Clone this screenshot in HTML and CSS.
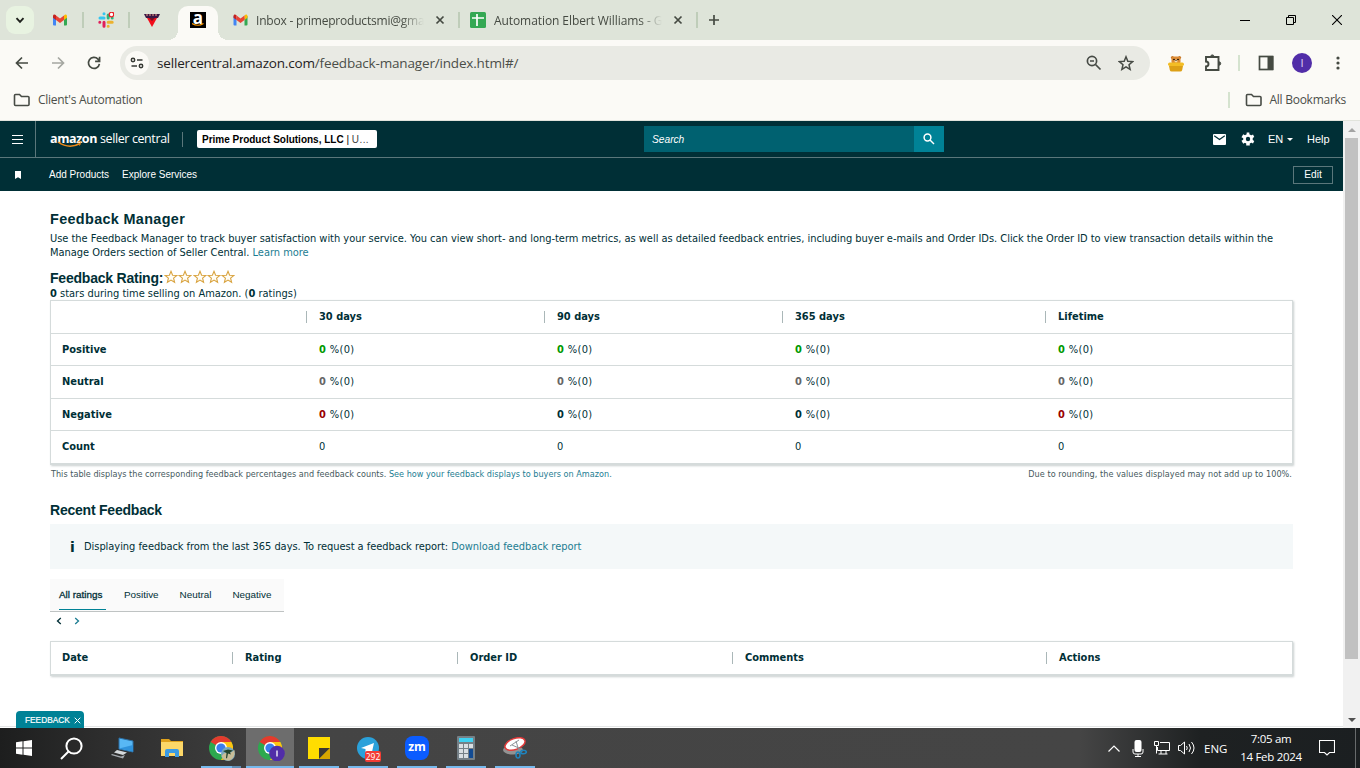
FILE: index.html
```html
<!DOCTYPE html>
<html lang="en">
<head>
  <meta charset="UTF-8" />
  <meta name="viewport" content="width=device-width, initial-scale=1.0"/>
  <title>Feedback Manager</title>
  <link rel="stylesheet" href="styles.css">
</head>
<body>
  <!-- Shared icons -->
  <svg class="defs" width="0" height="0">
    <symbol id="gmail" viewBox="0 0 14 12">
      <path d="M0 2v8.500a1 1 0 0 0 1 1h2V4z" fill="#4285f4"/>
      <path d="M14 2v8.500a1 1 0 0 1-1 1h-2V4z" fill="#34a853"/>
      <path d="M11 1.500V6l3-2.200V2c0-1.500-1.600-2-2.600-1z" fill="#fbbc04"/>
      <path d="M0 2v1.800L3 6V1.300C1.600-.2 0 .5 0 2z" fill="#c5221f"/>
      <path d="M3 1.400V6l4 3 4-3V1.400L7 4.500z" fill="#ea4335"/>
    </symbol>
    <symbol id="folder" viewBox="0 0 18 14">
      <path d="M1.500 11.500v-9q0-1 1-1h4l2 2h6.500q1 0 1 1v7q0 1-1 1h-12.500q-1 0-1-1z" fill="none" stroke="#474b45" stroke-width="1.600"/>
    </symbol>
    <symbol id="close" viewBox="0 0 10 10">
      <path d="M1.500 1.500l7 7M8.500 1.500l-7 7" stroke="#454a42" stroke-width="1.700"/>
    </symbol>
    <symbol id="star" viewBox="0 0 14 14">
      <path d="M7 1.300l1.600 3.900 4.200.3-3.200 2.700 1 4.100L7 10.100l-3.600 2.200 1-4.100-3.200-2.700 4.200-.3z" fill="#fffdf5" stroke="#d9a441" stroke-width="1.100"/>
    </symbol>
    <symbol id="chrome" viewBox="0 0 24 24">
      <circle cx="12" cy="12" r="12" fill="#2da94f"/>
      <path d="M12 12L1.600 6A12 12 0 0 1 22.400 6z" fill="#e33b2e"/>
      <path d="M12 12V6h10.400A12 12 0 0 1 12 24l5.200-9z" fill="#fdc411"/>
      <circle cx="12" cy="12" r="6" fill="#fff"/>
      <circle cx="12" cy="12" r="4.600" fill="#3b7ded"/>
    </symbol>
  </svg>

  <!-- Browser tabs -->
  <div class="tabstrip">
    <div class="tab-search"><svg width="10" height="7" viewBox="0 0 10 7"><path d="M1.500 1.200L5 4.800l3.500-3.600" fill="none" stroke="#1e211c" stroke-width="1.900"/></svg></div>
    <div class="pinned"><svg width="14" height="12"><use href="#gmail"/></svg></div>
    <div class="pinned">
      <svg width="16" height="16" viewBox="0 0 16 16" fill="none" stroke-width="3" stroke-linecap="round">
        <path d="M6 1.700v0M2 6h4" stroke="#36c5f0"/>
        <path d="M10.200 3v3M14.200 6v0" stroke="#2eb67d"/>
        <path d="M10.200 10.300h4M10.200 14.200v0" stroke="#ecb22e"/>
        <path d="M6 10.300v4M1.800 10.300v0" stroke="#e01e5a"/>
        <circle cx="13.500" cy="2.500" r="2.300" fill="#fff" stroke="#ed1c24" stroke-width="1.300"/>
      </svg>
    </div>
    <div class="pinned last">
      <svg width="16" height="14" viewBox="0 0 16 14"><path d="M0 1h16l-2 4H2z" fill="#3a1745"/><path d="M2 2h12" stroke="#f4a28a" stroke-dasharray="2 1"/><path d="M3 5h10L8 14z" fill="#f20d1b"/><path d="M5 5h6L8 8z" fill="#751026"/></svg>
    </div>
    <div class="tab active"><div class="amazon-fav">a<svg width="12" height="3" viewBox="0 0 12 3"><path d="M0 .5q6 3.500 11.500 0" fill="none" stroke="#f90" stroke-width="1.200"/></svg></div></div>
    <div class="tab wide inbox">
      <svg width="15" height="12"><use href="#gmail"/></svg>
      <span class="tab-title">Inbox - primeproductsmi@gma</span>
      <svg class="tab-close" width="10" height="10"><use href="#close"/></svg>
    </div>
    <div class="tab wide sheet">
      <svg width="16" height="16" viewBox="0 0 16 16"><rect width="16" height="16" rx="1.500" fill="#34a853"/><path d="M2 6h12M7 2v12" stroke="#fff" stroke-width="1.700"/></svg>
      <span class="tab-title">Automation Elbert Williams - Go</span>
      <svg class="tab-close" width="10" height="10"><use href="#close"/></svg>
    </div>
    <svg class="new-tab" width="12" height="12" viewBox="0 0 12 12"><path d="M6 1v10M1 6h10" stroke="#454a42" stroke-width="1.700"/></svg>
    <div class="window-btns">
      <svg width="10" height="10" viewBox="0 0 10 10"><path d="M0 5.500h10" stroke="#000"/></svg>
      <svg width="10" height="10" viewBox="0 0 10 10" fill="none" stroke="#000"><path d="M.5 2.500h7v7h-7zM2.500 2.500v-2h7v7h-2"/></svg>
      <svg width="10" height="10" viewBox="0 0 10 10"><path d="M0 0l10 10M10 0L0 10" stroke="#000" stroke-width="1.100"/></svg>
    </div>
  </div>

  <!-- Address bar -->
  <div class="toolbar">
    <div class="tool"><svg width="14" height="14" viewBox="0 0 14 14" fill="none" stroke="#454a42" stroke-width="1.700"><path d="M13 7H2M7 1.500L1.500 7 7 12.500"/></svg></div>
    <div class="tool"><svg width="14" height="14" viewBox="0 0 14 14" fill="none" stroke="#a5a7a1" stroke-width="1.700"><path d="M1 7h11M7 1.500L12.500 7 7 12.500"/></svg></div>
    <div class="tool"><svg width="14" height="14" viewBox="0 0 14 14" fill="none" stroke="#454a42" stroke-width="1.700"><path d="M12.400 7.800A5.500 5.500 0 1 1 11 3.200L12.500 5M12.600 .8v4.500H8.100"/></svg></div>
    <div class="omnibox">
      <div class="site-info"><svg width="14" height="12" viewBox="0 0 14 12" fill="none" stroke="#363934" stroke-width="1.500"><circle cx="3" cy="3" r="1.700"/><path d="M7 3h5.500M1.500 9H7"/><circle cx="11" cy="9" r="1.700"/></svg></div>
      <span class="url"><b>sellercentral.amazon.com</b>/feedback-manager/index.html#/</span>
      <svg class="zoom-icon" width="16" height="16" viewBox="0 0 16 16" fill="none" stroke="#474b45" stroke-width="1.700"><circle cx="6" cy="6" r="4.600"/><path d="M9.500 9.500l5 5M4 6h4"/></svg>
      <svg class="bookmark-star" width="16" height="16" viewBox="0 0 16 16" fill="none" stroke="#474b45" stroke-width="1.500"><path d="M8 1.800l1.800 4.400 4.800.4L11 9.700l1.100 4.600L8 11.800l-4.100 2.500L5 9.700 1.400 6.600l4.800-.4z"/></svg>
    </div>
    <div class="tool ext"><svg width="18" height="17" viewBox="0 0 18 17"><circle cx="5.500" cy="2.500" r="1.600" fill="#c77624"/><circle cx="12.500" cy="2.500" r="1.600" fill="#c77624"/><rect x="4.500" y="1.500" width="9" height="8" rx="3" fill="#dc8b35"/><circle cx="7" cy="4.500" r=".8"/><circle cx="11" cy="4.500" r=".8"/><circle cx="9" cy="6" r="1.500" fill="#f7dca8"/><circle cx="9" cy="5.500" r=".6"/><rect x="1" y="7.500" width="16" height="3.500" rx="1.700" fill="#f3bd25"/><path d="M2 11h14l-.8 4q-.3 1.500-2 1.500H4.800q-1.700 0-2-1.500z" fill="#dda016"/></svg></div>
    <div class="tool puzzle"><svg width="18" height="18" viewBox="0 0 18 18" fill="none" stroke="#454a42" stroke-width="1.900"><path d="M2 3h12.500v13H2v-3.500q2.500-.2 2.500-2.500T2 7.500z"/><path d="M6.700 2.500a1.600 1.600 0 0 1 3.200 0M15 7.800a1.600 1.600 0 0 1 0 3.400" fill="#454a42" stroke-width="1"/></svg></div>
    <span class="divider"></span>
    <div class="tool"><svg width="16" height="16" viewBox="0 0 16 16"><rect x="1.500" y="1.500" width="13" height="13" fill="none" stroke="#454a42" stroke-width="1.700"/><path d="M9.500 1h6v14h-6z" fill="#454a42"/></svg></div>
    <div class="tool"><div class="avatar">I</div></div>
    <div class="tool"><svg width="4" height="14" viewBox="0 0 4 14" fill="#454a42"><circle cx="2" cy="2" r="1.600"/><circle cx="2" cy="7" r="1.600"/><circle cx="2" cy="12" r="1.600"/></svg></div>
  </div>

  <div class="bookmarks">
    <svg width="18" height="14"><use href="#folder"/></svg>
    <span class="bm-client">Client's Automation</span>
    <div class="all-bookmarks">
      <svg width="18" height="14"><use href="#folder"/></svg>
      <span>All Bookmarks</span>
    </div>
  </div>

  <div class="viewport">
    <div class="page">
      <div class="topbar">
        <div class="menu"><svg width="11" height="10" viewBox="0 0 11 10"><path d="M0 1.500h11M0 5.500h11M0 9.500h11" stroke="#fff" stroke-width="1.200"/></svg></div>
        <div class="logo">
          <b>amazon</b><span>seller central</span>
          <svg class="smile" width="26" height="7" viewBox="0 0 26 7" fill="none" stroke="#f08c1a"><path d="M1 1q11 7.500 22 1.500" stroke-width="1.500"/><path d="M20.500 1q4-1 3.500 0T22.500 4.500"/></svg>
        </div>
        <div class="account"><b>Prime Product Solutions, LLC</b> | <span>U...</span></div>
        <div class="search">
          <span>Search</span>
          <div class="search-btn"><svg width="12" height="12" viewBox="0 0 12 12" fill="none" stroke="#fff" stroke-width="1.500"><circle cx="4.500" cy="4.500" r="3.400"/><path d="M7 7l4 4"/></svg></div>
        </div>
        <svg class="mail" width="13" height="11" viewBox="0 0 13 11"><rect width="13" height="11" rx="1" fill="#fff"/><path d="M1.200 1.800l5.300 3.600 5.300-3.600" fill="none" stroke="#002f36" stroke-width="1.200"/></svg>
        <svg class="gear" width="14" height="14" viewBox="0 0 14 14"><g fill="#fff"><path d="M5.700.5h2.600l.5 13H5.200z"/><path d="M5.700.5h2.600l.5 13H5.200z" transform="rotate(60 7 7)"/><path d="M5.700.5h2.600l.5 13H5.200z" transform="rotate(120 7 7)"/><circle cx="7" cy="7" r="4.800"/></g><circle cx="7" cy="7" r="2.200" fill="#002f36"/></svg>
        <span class="lang">EN</span>
        <span class="caret"></span>
        <span class="help">Help</span>
      </div>
      <div class="subbar">
        <svg width="6" height="8" viewBox="0 0 6 8"><path d="M0 0h6v8L3 6.200 0 8z" fill="#fff"/></svg>
        <span class="add">Add Products</span>
        <span class="explore">Explore Services</span>
        <button class="edit">Edit</button>
      </div>

      <div class="content">
        <h1>Feedback Manager</h1>
        <p class="intro">Use the Feedback Manager to track buyer satisfaction with your service. You can view short- and long-term metrics, as well as detailed feedback entries, including buyer e-mails and Order IDs. Click the Order ID to view transaction details within the<br>Manage Orders section of Seller Central. <a>Learn more</a></p>

        <div class="rating">
          <h2>Feedback Rating:</h2>
          <svg width="14" height="14"><use href="#star"/></svg>
          <svg width="14" height="14"><use href="#star"/></svg>
          <svg width="14" height="14"><use href="#star"/></svg>
          <svg width="14" height="14"><use href="#star"/></svg>
          <svg width="14" height="14"><use href="#star"/></svg>
        </div>
        <p><b>0</b> stars during time selling on Amazon. (<b>0</b> ratings)</p>

        <div class="summary">
          <div class="row head"><span></span><b>30 days</b><b>90 days</b><b>365 days</b><b>Lifetime</b></div>
          <div class="row short"><b>Positive</b><span><b class="pos">0</b> %(0)</span><span><b class="pos">0</b> %(0)</span><span><b class="pos">0</b> %(0)</span><span><b class="pos">0</b> %(0)</span></div>
          <div class="row"><b>Neutral</b><span><b class="neu">0</b> %(0)</span><span><b class="neu">0</b> %(0)</span><span><b class="neu">0</b> %(0)</span><span><b class="neu">0</b> %(0)</span></div>
          <div class="row short"><b>Negative</b><span><b class="neg">0</b> %(0)</span><span><b>0</b> %(0)</span><span><b>0</b> %(0)</span><span><b class="neg">0</b> %(0)</span></div>
          <div class="row"><b>Count</b><span>0</span><span>0</span><span>0</span><span>0</span></div>
        </div>
        <div class="notes">
          <span>This table displays the corresponding feedback percentages and feedback counts. <a>See how your feedback displays to buyers on Amazon.</a></span>
          <span class="rounding">Due to rounding, the values displayed may not add up to 100%.</span>
        </div>

        <h2 class="recent">Recent Feedback</h2>
        <div class="info"><i>i</i><span>Displaying feedback from the last 365 days. To request a feedback report: <a>Download feedback report</a></span></div>

        <div class="filters">
          <span class="selected">All ratings</span><span>Positive</span><span>Neutral</span><span>Negative</span>
        </div>
        <div class="pager">
          <svg width="6" height="8" viewBox="0 0 6 8"><path d="M4.800 1L1.500 4l3.300 3" fill="none" stroke="#002f36" stroke-width="1.300"/></svg>
          <svg width="6" height="8" viewBox="0 0 6 8"><path d="M1.200 1l3.300 3-3.300 3" fill="none" stroke="#1c7d92" stroke-width="1.300"/></svg>
        </div>

        <div class="feedback-list"><b>Date</b><b>Rating</b><b>Order ID</b><b>Comments</b><b>Actions</b></div>
      </div>
      <div class="feedback-tab">FEEDBACK <svg width="7" height="7" viewBox="0 0 7 7"><path d="M.7.7l5.600 5.600M6.300.7L.7 6.300" stroke="#fff"/></svg></div>
    </div>
    <div class="scrollbar"><span class="up"></span><div class="thumb"></div><span class="down"></span></div>
  </div>

  <!-- Taskbar -->
  <div class="taskbar">
    <div class="app start"><svg width="16" height="16" viewBox="0 0 16 16" fill="#fff"><path d="M0 2.200L6.500 1.300V7.500H0zM7.500 1.200L16 0v7.500H7.500zM0 8.500h6.500v6.200L0 13.800zM7.500 8.500H16V16l-8.500-1.200z"/></svg></div>
    <div class="app find"><svg width="23" height="23" viewBox="0 0 23 23" fill="none" stroke="#fff" stroke-width="2"><circle cx="14" cy="9" r="7.600"/><path d="M8.500 14.500L1 22"/></svg></div>
    <div class="app"><svg width="24" height="22" viewBox="0 0 24 22"><path d="M8 1l14 3v11L8 12z" fill="#58b7f4" stroke="#2a6fa5"/><path d="M8 11.500l14 3V8z" fill="#2f92db"/><path d="M6 13l10 2.500-4 2.500-9-2.500z" fill="#d5d9dc"/><path d="M1 17l9 2.500 4-1.500-2 3.500L0 18z" fill="#a6abb0"/></svg></div>
    <div class="app"><svg width="22" height="20" viewBox="0 0 22 20"><path d="M0 1h8l2 2h12v15H0z" fill="#e0a21c"/><path d="M0 4h22v14H0z" fill="#fcd768"/><path d="M4 19v-6q0-2 2-2h10q2 0 2 2v6h-4v-4H8v4z" fill="#3b9be4"/></svg></div>
    <div class="app running two">
      <svg width="27" height="25" viewBox="0 0 27 25"><use href="#chrome" width="24" height="24"/><circle cx="19" cy="18" r="7" fill="#77a7bb"/><path d="M12.500 20q3-4 6-3t7-3q1 8-5 10.500-6 .5-8-4.500z" fill="#c8bd98"/><path d="M14 15l5-1.500 5 1-3 2 1 2-3-1-1 5-1-.500.500-5z" fill="#24452c"/></svg>
    </div>
    <div class="app running current">
      <svg width="27" height="25" viewBox="0 0 27 25"><use href="#chrome" width="24" height="24"/><circle cx="19" cy="17.500" r="7.800" fill="#512da8"/><path d="M19 14.500v6" stroke="#fff" stroke-width="1.300"/></svg>
    </div>
    <div class="app running"><svg width="22" height="22" viewBox="0 0 22 22"><path d="M0 0h22v11L11 22H0z" fill="#ffdd00"/><path d="M11 11h11L11 22z" fill="#3b3933"/><path d="M22 11v11H11z" fill="#d7a600"/></svg></div>
    <div class="app running">
      <svg width="22" height="22" viewBox="0 0 22 22"><circle cx="11" cy="11" r="11" fill="#2aa1da"/><path d="M4 11l13-5-2.500 11-4-3-2 2v-4z" fill="#fff"/></svg>
      <span class="count">292</span>
    </div>
    <div class="app running"><div class="zoom-app">zm</div></div>
    <div class="app running"><svg width="18" height="24" viewBox="0 0 18 24"><rect width="18" height="24" rx="1" fill="#758087"/><path d="M2 2h14v4H2z" fill="#3fd1f1"/><path d="M2 8h4v4H2zM7 8h4v4H7zM12 8h4v4h-4zM2 13h4v4H2zM7 13h4v4H7zM2 18h4v4H2zM7 18h4v4H7z" fill="#d9dfe3"/><path d="M12 13h4v9h-4z" fill="#124b93"/></svg></div>
    <div class="app running"><svg width="24" height="22" viewBox="0 0 24 22"><ellipse cx="10" cy="13" rx="10" ry="4.500" fill="#929292"/><ellipse cx="12" cy="7" rx="10.500" ry="5.500" transform="rotate(-20 12 7)" fill="#fff" stroke="#e23b3b" stroke-width="1.500"/><path d="M7 9l9-6M9 8l9 4M13 4l3 10" stroke="#8b9297"/><g fill="none" stroke="#1e83bd" stroke-width="1.600"><ellipse cx="15" cy="18" rx="2" ry="3"/><ellipse cx="20.500" cy="15" rx="2.800" ry="1.800"/></g></svg></div>

    <div class="tray">
      <svg width="12" height="7" viewBox="0 0 12 7"><path d="M.5 6.500L6 1l5.500 5.500" fill="none" stroke="#fff" stroke-width="1.200"/></svg>
      <svg class="t-mic" width="12" height="17" viewBox="0 0 12 17"><rect x="2.500" width="7" height="12" rx="2" fill="#fff"/><path d="M1 9v3q0 2 2 2h6q2 0 2-2V9M6 14v2M3 16.500h6" fill="none" stroke="#fff"/></svg>
      <svg class="t-net" width="16" height="14" viewBox="0 0 16 14" fill="none" stroke="#fff"><path d="M6 1.500h9.500v8h-12V6M7 9.500V13M12 9.500V13M4.500 13h9M.5.500h4v4h-4zM2.500 4.500v8"/></svg>
      <svg class="t-vol" width="17" height="14" viewBox="0 0 17 14" fill="none" stroke="#fff"><path d="M.5 4.500h2l4-3.500v12l-4-3.500h-2zM8.500 5q1.500 2 0 4M11 3q3 4 0 8M13.500 1q5 6 0 12"/></svg>
      <span class="t-lang">ENG</span>
      <div class="clock"><span>7:05 am</span><span>14 Feb 2024</span></div>
      <svg class="t-note" width="16" height="16" viewBox="0 0 16 16"><path d="M.5.500h15v12h-5L8 15l-2.500-2.500h-5z" fill="none" stroke="#fff" stroke-width="1.100"/></svg>
    </div>
  </div>
</body>
</html>
```
FILE: styles.css
```css
* {
  box-sizing: border-box;
}

body {
  margin: 0;
  width: 1360px;
  height: 768px;
  overflow: hidden;
  background: #fff;
  font-family: "Open Sans", "Noto Sans", sans-serif;
  white-space: nowrap;
}

svg {
  display: block;
  flex: none;
}

.defs {
  position: absolute;
}

/* tabs */
.tabstrip {
  display: flex;
  align-items: center;
  height: 40px;
  background: #dee4d9;
  font-size: 12px;
  color: #454a42;
}

.tab-search {
  display: flex;
  align-items: center;
  justify-content: center;
  width: 28px;
  height: 28px;
  margin: 0 4px 0 6px;
  border-radius: 9px;
  background: #e8f3e1;
}

.pinned {
  display: flex;
  align-items: center;
  justify-content: center;
  width: 46px;
  height: 16px;
  border-right: 2px solid #bfcdb9;
}

.pinned.last {
  width: 44px;
  border: none;
  margin-right: 4px;
}

.tab {
  display: flex;
  align-items: center;
}

.tab.active {
  position: relative;
  align-self: flex-end;
  justify-content: center;
  width: 40px;
  height: 34px;
  border-radius: 10px 10px 0 0;
  background: #fbfaf6;
}

.tab.active::before,
.tab.active::after {
  content: "";
  position: absolute;
  bottom: 0;
  left: -10px;
  width: 10px;
  height: 10px;
  background: radial-gradient(circle at 0 0, transparent 10px, #fbfaf6 10px);
}

.tab.active::after {
  left: 40px;
  background: radial-gradient(circle at 100% 0, transparent 10px, #fbfaf6 10px);
}

.amazon-fav {
  display: flex;
  flex-direction: column;
  align-items: center;
  width: 16px;
  height: 16px;
  margin-bottom: 6px;
  background: #000;
  color: #fff;
  font: bold 17px/11px "Open Sans", sans-serif;
}

.tab.wide {
  height: 16px;
  padding-left: 15px;
  border-right: 2px solid #bfcdb9;
}

.inbox {
  width: 242px;
}

.tab.wide.sheet {
  width: 238px;
  padding-left: 10px;
}

.tab-title {
  width: 168px;
  margin-left: 8px;
  letter-spacing: -.2px;
  -webkit-mask-image: linear-gradient(90deg, #000 145px, transparent 168px);
}

.sheet .tab-title {
  letter-spacing: -.08px;
}

.tab-close {
  margin-left: 11px;
}

.new-tab {
  margin-left: 10px;
}

.window-btns {
  display: flex;
  gap: 36px;
  margin: 0 18px 0 auto;
}

/* toolbar */
.toolbar {
  display: flex;
  align-items: center;
  height: 46px;
  padding-left: 4px;
  background: #fbfaf6;
}

.tool {
  display: flex;
  align-items: center;
  justify-content: center;
  width: 36px;
  flex: none;
}

.ext {
  margin-left: 8px;
}

.puzzle {
  margin-left: 1px;
}

.divider {
  width: 2px;
  height: 16px;
  margin: 0 8px 0 7px;
  background: #d5e3cf;
}

.omnibox {
  display: flex;
  align-items: center;
  width: 1030px;
  height: 34px;
  margin-left: 8px;
  padding-left: 5px;
  border-radius: 17px;
  background: #e9eae4;
}

.site-info {
  display: flex;
  align-items: center;
  justify-content: center;
  width: 24px;
  height: 24px;
  border-radius: 50%;
  background: #fbfaf6;
}

.url {
  margin-left: 8px;
  font-size: 13.500px;
  letter-spacing: -.17px;
  color: #4b4e49;
}

.url b {
  font-weight: 400;
  color: #1f211d;
}

.zoom-icon {
  margin-left: auto;
}

.bookmark-star {
  margin: 0 16px;
}

.avatar {
  width: 20px;
  height: 20px;
  border-radius: 50%;
  background: #512da8;
  color: #e1d8f5;
  font-size: 11px;
  line-height: 20px;
  text-align: center;
}

.bookmarks {
  display: flex;
  align-items: center;
  height: 35px;
  padding: 0 14px 7px 13px;
  border-bottom: 1px solid #e1e3dc;
  background: #fbfaf6;
  font-size: 12px;
  letter-spacing: -.27px;
  color: #4b4e49;
}

.bm-client {
  margin-left: 7px;
}

.all-bookmarks {
  display: flex;
  align-items: center;
  gap: 7px;
  margin-left: auto;
  height: 16px;
  padding-left: 15px;
  border-left: 2px solid #d5e3cf;
}

/* page */
.viewport {
  display: flex;
  height: 607px;
}

.page {
  position: relative;
  width: 1343px;
  border-bottom: 1px solid #fff;
  box-shadow: inset 0 -1px #e4e6e6;
  color: #002f36;
  font-family: "DejaVu Sans", Verdana, sans-serif;
  font-size: 9.900px;
}

.topbar,
.subbar {
  display: flex;
  align-items: center;
  background: #002f36;
  color: #fff;
  font-family: "Liberation Sans", Arial, sans-serif;
}

.topbar {
  height: 37px;
  border-bottom: 1px solid #5a777b;
}

.menu {
  display: flex;
  align-items: center;
  justify-content: center;
  width: 36px;
  height: 36px;
  border-right: 1px solid #5a777b;
}

.logo {
  position: relative;
  display: flex;
  align-items: center;
  gap: 3px;
  width: 147px;
  height: 15px;
  padding-left: 14px;
  border-right: 1px solid #5a777b;
  font: 12.500px/15px "Open Sans", sans-serif;
  letter-spacing: -.4px;
}

.logo b,
.logo span {
  margin-bottom: 2px;
}

.smile {
  position: absolute;
  left: 21px;
  top: 9px;
}

.account {
  width: 180px;
  height: 18px;
  margin-left: 14px;
  padding-left: 5px;
  border-radius: 2px;
  background: #fff;
  color: #000;
  font-size: 10px;
  line-height: 19px;
}

.account span {
  color: #444;
  letter-spacing: .4px;
}

.search {
  display: flex;
  align-items: center;
  justify-content: space-between;
  width: 300px;
  height: 26px;
  margin-left: 267px;
  padding-left: 8px;
  background: #006170;
  font-size: 10.200px;
  font-style: italic;
}

.search-btn {
  display: flex;
  align-items: center;
  justify-content: center;
  width: 30px;
  height: 26px;
  background: #008296;
}

.mail {
  margin-left: 269px;
}

.gear {
  margin-left: 15px;
}

.lang,
.help {
  width: 16px;
  margin-left: 13px;
  font-size: 11px;
}

.help {
  margin-left: 14px;
}

.caret {
  margin-left: 3px;
  border: 3px solid transparent;
  border-top-color: #fff;
  border-bottom: 0;
}

.subbar {
  height: 33px;
  padding: 0 10px 0 15px;
  font-size: 10px;
}

.add {
  margin-left: 28px;
}

.explore {
  margin-left: 13px;
}

.edit {
  width: 40px;
  height: 18px;
  margin-left: auto;
  padding: 0;
  border: 1px solid #5a777b;
  background: none;
  color: #fff;
  font: 10.200px "Liberation Sans", Arial, sans-serif;
}

.content {
  padding: 19px 50px 0;
}

h1,
h2 {
  margin: 0;
  font: bold 14.400px/18px "Liberation Sans", Arial, sans-serif;
}

h1 {
  letter-spacing: .35px;
}

h2 {
  font-size: 14px;
  letter-spacing: -.22px;
}

p {
  margin: 0;
  line-height: 14px;
}

a {
  color: #1c7d92;
}

.intro {
  margin-top: 4px;
  letter-spacing: -.021px;
}

.rating {
  display: flex;
  align-items: center;
  height: 18px;
  margin-top: 9px;
}

.rating h2 {
  width: 114px;
}

.rating svg {
  margin: -3px .3px 0 0;
}

.summary,
.feedback-list {
  border: 1px solid #d5dbdb;
  border-bottom-width: 2px;
  box-shadow: 1px 1px 2px #c9cfcf;
}

.summary {
  margin-top: -1px;
  height: 165px;
}

.row {
  display: grid;
  grid-template-columns: 255px 238px 238px 263px 1fr;
  align-items: center;
  height: 33px;
  padding-bottom: 1px;
  border-top: 1px solid #d5dbdb;
}

.row.short,
.row.head {
  height: 32px;
}

.row.head {
  border: none;
}

.row > * {
  padding-left: 13px;
}

.row > span {
  letter-spacing: .35px;
}

.row > :first-child {
  padding-left: 11px;
}

.head b,
.feedback-list b {
  display: flex;
  align-items: center;
  padding: 0;
}

.head b::before,
.feedback-list b + b::before {
  content: "";
  width: 1px;
  height: 12px;
  margin-right: 12px;
  background: #aab7b8;
}

.pos {
  color: #009900;
}

.neu {
  color: #666;
}

.neg {
  color: #990000;
}

.notes {
  display: flex;
  justify-content: space-between;
  margin-top: 2px;
  padding: 0 1px;
  font-size: 8.100px;
  line-height: 14px;
  letter-spacing: .02px;
  color: #45595d;
}

.rounding {
  letter-spacing: .06px;
}

.recent {
  margin-top: 20px;
}

.info {
  display: flex;
  align-items: center;
  height: 45px;
  margin-top: 5px;
  padding-left: 20px;
  background: #f4f8f9;
  letter-spacing: -.035px;
}

.info i {
  width: 14px;
  font: bold 14px "DejaVu Sans", sans-serif;
}

.filters {
  display: flex;
  width: 234px;
  height: 33px;
  margin-top: 10px;
  padding-left: 9px;
  border-bottom: 1px solid #bfc3c3;
  background: #fafafa;
  font: 9.900px/32px "Liberation Sans", Arial, sans-serif;
}

.filters span {
  flex: none;
  margin-right: 21px;
}

.filters .selected {
  width: 47px;
  height: 31px;
  margin-right: 18px;
  border-bottom: 1px solid #008296;
  -webkit-text-stroke: .3px;
}

.pager {
  display: flex;
  gap: 12px;
  margin: 5px 0 0 6px;
}

.feedback-list {
  display: grid;
  grid-template-columns: 181px 225px 275px 314px 1fr;
  align-items: center;
  height: 35px;
  margin-top: 16px;
  padding-bottom: 1px;
}

.feedback-list b:first-child {
  padding-left: 11px;
}

.feedback-tab {
  position: absolute;
  left: 16px;
  bottom: -1px;
  display: flex;
  align-items: center;
  gap: 4px;
  width: 68px;
  height: 17px;
  padding-left: 9px;
  border-radius: 4px 4px 0 0;
  background: #008296;
  color: #fff;
  font: 8.300px "Liberation Sans", Arial, sans-serif;
  -webkit-text-stroke: .2px;
}

.feedback-tab svg {
  margin-top: 2px;
}

.scrollbar {
  display: flex;
  flex-direction: column;
  align-items: center;
  width: 17px;
  padding: 7px 0 6px;
  background: #f1f1f1;
}

.up,
.down {
  border: 4px solid transparent;
}

.up {
  border-bottom-color: #a3a3a3;
  border-top: 0;
}

.down {
  margin-top: auto;
  border-top-color: #505050;
  border-bottom: 0;
}

.thumb {
  width: 13px;
  height: 521px;
  margin-top: 6px;
  background: #c1c1c1;
}

/* taskbar */
.taskbar {
  display: flex;
  height: 40px;
  background: linear-gradient(90deg, #1d1e1e 0, #2d2d2d 100px, #444 300px, #454545 1080px, #1e2122 1200px, #1b1f21);
  color: #fff;
}

.app {
  position: relative;
  display: flex;
  align-items: center;
  justify-content: center;
  width: 49px;
  padding-right: 1px;
}

.start {
  width: 48px;
  padding: 0;
}

.find {
  width: 51px;
  padding-right: 4px;
}

.running::after {
  content: "";
  position: absolute;
  left: 4px;
  bottom: 0;
  width: 40px;
  height: 2px;
  background: #76b9ed;
}

.running.two::after {
  background: linear-gradient(90deg, #76b9ed 31px, #5f8db4 31px);
}

.current {
  background: #6d6d6d;
  background-clip: content-box;
}

.current::after {
  left: 0;
  width: 48px;
}

.two svg,
.current svg {
  margin-left: 2px;
}

.count {
  position: absolute;
  left: 21px;
  top: 23px;
  width: 16px;
  height: 11px;
  border-radius: 2px;
  background: #f23c34;
  font-size: 8.500px;
  line-height: 11px;
  text-align: center;
}

.zoom-app {
  width: 24px;
  height: 24px;
  border-radius: 8px;
  background: #0b5cff;
  font: bold 12px/22px "Open Sans", sans-serif;
  text-align: center;
}

.tray {
  display: flex;
  align-items: center;
  width: 248px;
  margin-left: auto;
  border-right: 1px solid #686b6c;
  margin-right: 4px;
  font-size: 11.500px;
}

.t-mic {
  margin-left: 12px;
}

.t-net {
  margin-left: 10px;
}

.t-vol {
  margin-left: 8px;
}

.t-lang {
  width: 30px;
  margin-left: 9px;
}

.clock {
  display: flex;
  flex-direction: column;
  align-items: center;
  width: 74px;
  line-height: 18px;
  letter-spacing: -.3px;
}

.t-note {
  margin-left: 11px;
}
```
